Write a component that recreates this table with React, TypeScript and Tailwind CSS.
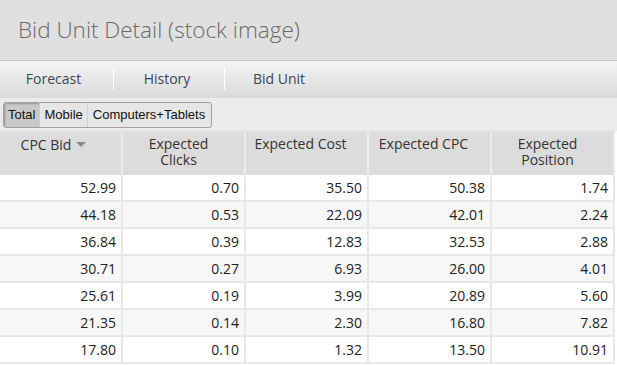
import React from 'react';

const rows = [
  ['52.99', '0.70', '35.50', '50.38', '1.74'],
  ['44.18', '0.53', '22.09', '42.01', '2.24'],
  ['36.84', '0.39', '12.83', '32.53', '2.88'],
  ['30.71', '0.27', '6.93', '26.00', '4.01'],
  ['25.61', '0.19', '3.99', '20.89', '5.60'],
  ['21.35', '0.14', '2.30', '16.80', '7.82'],
  ['17.80', '0.10', '1.32', '13.50', '10.91'],
];

const App: React.FC = () => {
  const font = { fontFamily: '"Open Sans", "DejaVu Sans", sans-serif' };
  const cols = 'grid grid-cols-[123px_123px_123px_123px_123px]';

  return (
    <div className="w-[617px] h-[365px] bg-white overflow-hidden" style={font}>
      {/* Title */}
      <div className="h-[60px] bg-[#e0e0e0] flex items-center pl-[18px]">
        <h1 className="text-[22.5px] font-light text-[#6a6a6a]">Bid Unit Detail (stock image)</h1>
      </div>
      <div className="h-px bg-[#c4c4c4]" />

      {/* Tabs */}
      <div className="h-[37px] bg-gradient-to-b from-[#f4f4f4] to-[#dadada] flex items-center text-[14px] text-[#3a4656] pb-[2px]">
        <div className="w-[113px] text-center pr-[6px]">Forecast</div>
        <div className="w-px h-[22px] bg-[#c8c8c8] border-r border-white" />
        <div className="w-[110px] text-center pr-[4px]">History</div>
        <div className="w-px h-[22px] bg-[#c8c8c8] border-r border-white" />
        <div className="w-[108px] text-center">Bid Unit</div>
      </div>

      {/* Segmented filter */}
      <div className="h-[33px] bg-[#ebebeb] flex items-center pl-[3px]">
        <div
          className="flex h-[26px] border border-[#a0a0a0] rounded-[3px] overflow-hidden text-[13px] text-[#111] bg-[#e6e6e6]"
          style={{ fontFamily: '"Liberation Sans", Arial, sans-serif' }}
        >
          <div className="px-[4px] flex items-center bg-[#c9c9c9] shadow-[inset_1px_1px_2px_rgba(0,0,0,0.25)]">Total</div>
          <div className="px-[4px] flex items-center border-l border-[#d0d0d0]">Mobile</div>
          <div className="pl-[5px] pr-[6px] flex items-center border-l border-[#d0d0d0]">Computers+Tablets</div>
        </div>
      </div>

      {/* Table */}
      <div className="w-[615px] border-t-2 border-[#e0e0e0]">
        <div className={`${cols} h-[42px] bg-[#dcdcdc] text-[14px] text-[#333] leading-[16px]`}>
          <div className="border-r-2 border-[#ececec] flex justify-center pt-[4px] pr-[14px]">
            <span>CPC Bid</span>
            <svg width="10" height="6" viewBox="0 0 10 6" className="ml-[5px] mt-[5px]">
              <path d="M0 0 L10 0 L5 5 Z" fill="#8a8a8a" />
            </svg>
          </div>
          <div className="border-r-2 border-[#ececec] text-center pt-[3px] pr-[10px]">Expected<br />Clicks</div>
          <div className="border-r-2 border-[#ececec] text-center pt-[3px] pr-[12px]">Expected Cost</div>
          <div className="border-r-2 border-[#ececec] text-center pt-[3px] pr-[12px]">Expected CPC</div>
          <div className="border-r-2 border-[#ececec] text-center pt-[3px] pr-[10px]">Expected<br />Position</div>
        </div>
        {rows.map((r, i) => (
          <div
            key={i}
            className={`${cols} h-[27px] border-b-2 border-[#e8e8e8] text-[14px] text-[#222] ${i % 2 ? 'bg-[#f7f7f7]' : 'bg-white'}`}
          >
            {r.map((v, j) => (
              <div key={j} className="border-r-2 border-[#e8e8e8] flex items-center justify-end pr-[5px]">
                {v}
              </div>
            ))}
          </div>
        ))}
      </div>
    </div>
  );
};

export default App;
